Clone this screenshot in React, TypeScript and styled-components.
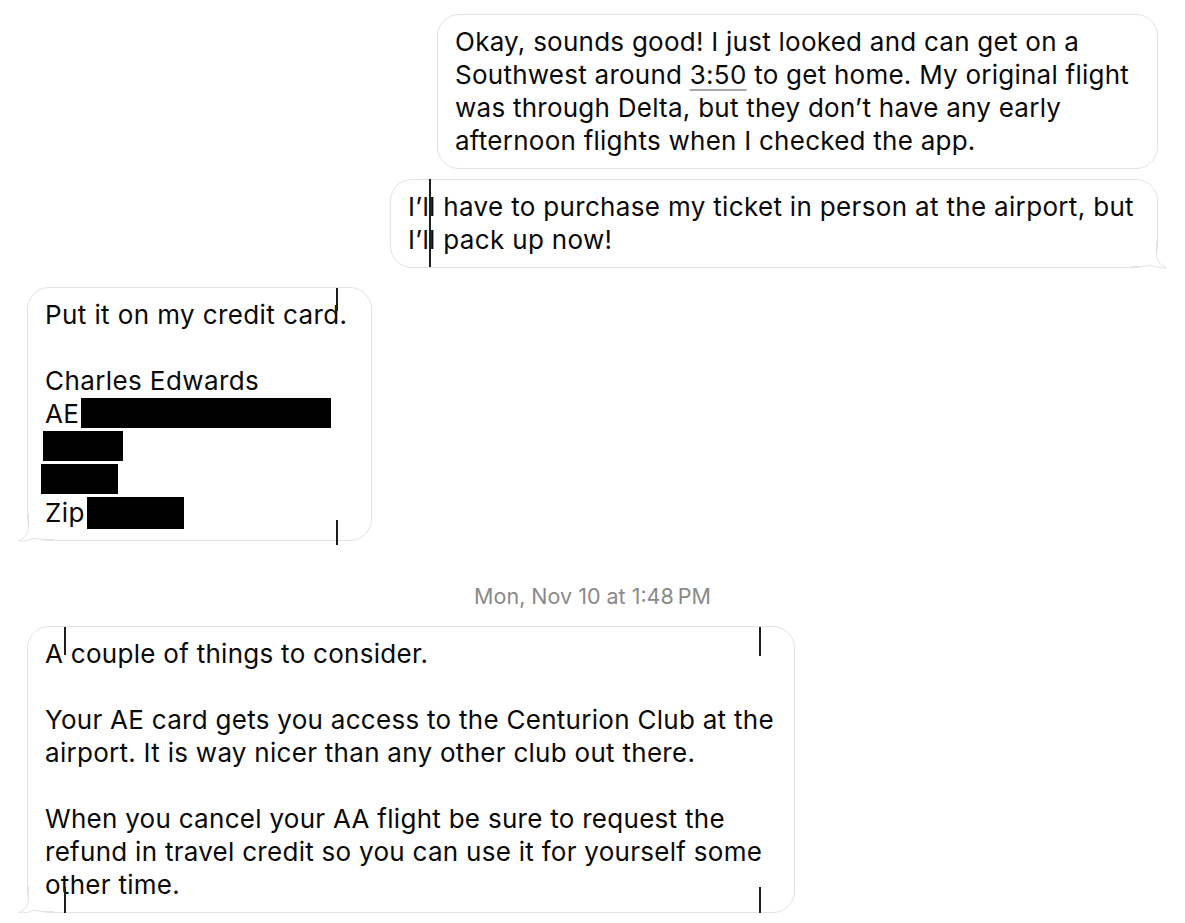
import React from "react";
import styled, { createGlobalStyle } from "styled-components";

const Global = createGlobalStyle`
  html, body { margin: 0; padding: 0; background: #ffffff; }
  body { font-family: Inter, "Liberation Sans", Arial, sans-serif; }
`;

const Page = styled.main`
  display: flex;
  flex-direction: column;
  padding: 14px 27px 0 27px;
  box-sizing: border-box;
  width: 1185px;
`;

const Group = styled.section<{ $side: "in" | "out"; $mt?: number }>`
  display: flex;
  flex-direction: column;
  gap: 10px;
  align-items: ${(p) => (p.$side === "out" ? "flex-end" : "flex-start")};
  margin-top: ${(p) => p.$mt ?? 0}px;
`;

const Bubble = styled.div<{ $w: number; $ls: number }>`
  position: relative;
  box-sizing: border-box;
  width: ${(p) => p.$w}px;
  background: #ffffff;
  border: 1px solid #e3e3e3;
  border-radius: 22px;
  padding: 10px 17px 11px 17px;
  font-family: Inter, "Liberation Sans", Arial, sans-serif;
  font-size: 26px;
  line-height: 33px;
  letter-spacing: ${(p) => p.$ls}px;
  color: #0a0a0a;
  white-space: nowrap;
`;

const Line = styled.span`
  display: block;
  min-height: 33px;
`;

const DataLink = styled.span`
  text-decoration: underline;
  text-decoration-color: #a9a9a9;
  text-decoration-thickness: 2px;
  text-underline-offset: 5px;
`;

const Redact = styled.span<{ $w: number; $h: number; $va: number; $ml: number }>`
  display: inline-block;
  width: ${(p) => p.$w}px;
  height: ${(p) => p.$h}px;
  vertical-align: ${(p) => p.$va}px;
  margin-left: ${(p) => p.$ml}px;
  background: #000000;
`;

const Caret = styled.i<{ $x: number; $y: number; $h: number }>`
  position: absolute;
  left: ${(p) => p.$x}px;
  top: ${(p) => p.$y}px;
  width: 1.5px;
  height: ${(p) => p.$h}px;
  background: #1e1e1e;
`;

const TailSvg = styled.svg<{ $side: "in" | "out" }>`
  position: absolute;
  bottom: -2px;
  ${(p) => (p.$side === "out" ? "right: -10px;" : "left: -10px; transform: scaleX(-1);")}
  width: 36px;
  height: 30px;
  overflow: visible;
`;

const Stamp = styled.div`
  align-self: center;
  margin: 42px 0 17px 0;
  font-family: Inter, "Liberation Sans", Arial, sans-serif;
  font-size: 21.5px;
  line-height: 26px;
  color: #8a8a8a;
`;

const Tail = ({ side }: { side: "in" | "out" }) => (
  <TailSvg $side={side} viewBox="0 0 36 30">
    <path
      d="M25.5 3 L25.5 14 C25.5 21 28.5 26 35.5 28.8 C30 29.4 24.5 28.3 19.5 26.2 C16.5 27.1 13.5 27.5 10 27.5 L1.5 27.5 Z"
      fill="#ffffff"
    />
    <path
      d="M25.5 2 L25.5 14 C25.5 21 28.5 26 35.5 28.8 C30 29.4 24.5 28.3 19.5 26.2 C16.5 27.1 13.5 27.5 10 27.5 L0 27.5"
      fill="none"
      stroke="#e3e3e3"
      strokeWidth="1"
    />
  </TailSvg>
);

export default function App() {
  return (
    <>
      <Global />
      <Page>
        <Group $side="out">
          <Bubble $w={721} $ls={0.25}>
            <Line>Okay, sounds good! I just looked and can get on a</Line>
            <Line>
              Southwest around <DataLink>3:50</DataLink> to get home. My original flight
            </Line>
            <Line>was through Delta, but they don’t have any early</Line>
            <Line>afternoon flights when I checked the app.</Line>
          </Bubble>
          <Bubble $w={768} $ls={0.33}>
            <Line>I’ll have to purchase my ticket in person at the airport, but</Line>
            <Line>I’ll pack up now!</Line>
            <Caret $x={38} $y={-1} $h={88} />
            <Tail side="out" />
          </Bubble>
        </Group>

        <Group $side="in" $mt={19}>
          <Bubble $w={345} $ls={0.4}>
            <Line>Put it on my credit card.</Line>
            <Line />
            <Line>Charles Edwards</Line>
            <Line>
              AE<Redact $w={250} $h={30} $va={-5} $ml={2} />
            </Line>
            <Line>
              <Redact $w={80} $h={30} $va={-5} $ml={-2} />
            </Line>
            <Line>
              <Redact $w={77} $h={30} $va={-5} $ml={-4} />
            </Line>
            <Line>
              Zip<Redact $w={97} $h={32} $va={-7} $ml={2} />
            </Line>
            <Caret $x={308} $y={0} $h={23} />
            <Caret $x={308} $y={232} $h={25} />
            <Tail side="in" />
          </Bubble>
        </Group>

        <Stamp>Mon, Nov 10 at 1:48&#8239;PM</Stamp>

        <Group $side="in">
          <Bubble $w={768} $ls={0.28}>
            <Line>A couple of things to consider.</Line>
            <Line />
            <Line>Your AE card gets you access to the Centurion Club at the</Line>
            <Line>airport. It is way nicer than any other club out there.</Line>
            <Line />
            <Line>When you cancel your AA flight be sure to request the</Line>
            <Line>refund in travel credit so you can use it for yourself some</Line>
            <Line>other time.</Line>
            <Caret $x={36} $y={0} $h={28} />
            <Caret $x={36} $y={260} $h={30} />
            <Caret $x={731} $y={0} $h={29} />
            <Caret $x={731} $y={260} $h={30} />
            <Tail side="in" />
          </Bubble>
        </Group>
      </Page>
    </>
  );
}
